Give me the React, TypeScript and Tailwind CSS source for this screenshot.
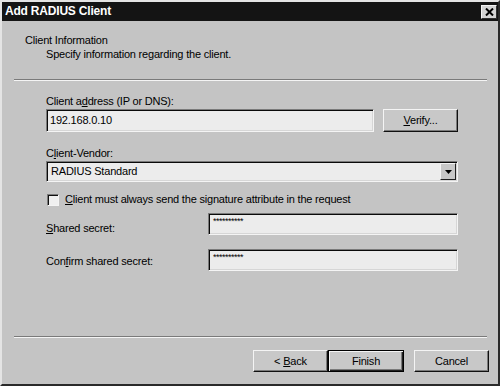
import React from "react";

const font = { fontFamily: '"Liberation Sans", Arial, sans-serif' };

function Sunken({ className = "", children }: { className?: string; children?: React.ReactNode }) {
  return (
    <div
      className={
        "border border-t-[#7a7a7a] border-l-[#7a7a7a] border-b-[#f4f4f4] border-r-[#f4f4f4] shadow-[inset_1px_1px_0_#0a0a0a,inset_-1px_-1px_0_#d6d6d6] bg-[#ececec] " +
        className
      }
    >
      {children}
    </div>
  );
}

function Btn({ children, def = false, className = "" }: { children: React.ReactNode; def?: boolean; className?: string }) {
  return (
    <div
      className={
        (def
          ? "border border-black shadow-[inset_1px_1px_0_#f4f4f4,inset_-1px_-1px_0_#202020,inset_-2px_-2px_0_#7a7a7a] "
          : "border border-t-[#f4f4f4] border-l-[#f4f4f4] border-b-[#101010] border-r-[#101010] shadow-[inset_-1px_-1px_0_#7a7a7a] ") +
        "flex items-center justify-center bg-[#c8c8c8] text-[11px] text-black " +
        className
      }
    >
      {children}
    </div>
  );
}

export default function App() {
  return (
    <div
      style={font}
      className="w-[500px] h-[386px] flex flex-col bg-[#c4c4c4] border-2 border-t-[#e4e4e4] border-l-[#e4e4e4] border-b-[#2a2a2a] border-r-[#2a2a2a] text-[11px] leading-[13px] tracking-[-0.2px] text-black"
    >
      {/* Title bar */}
      <div className="h-[19px] bg-[#141414] flex items-center justify-between pl-[3px] pr-[1px]">
        <span className="text-white font-bold text-[12px] leading-[15px] tracking-[-0.2px]">Add RADIUS Client</span>
        <div className="w-[16px] h-[14px] bg-[#d4d4d4] border border-t-[#f4f4f4] border-l-[#f4f4f4] border-b-[#303030] border-r-[#303030] flex items-center justify-center">
          <svg width="9" height="8" viewBox="0 0 9 8">
            <path d="M1 0.5 L8 7.5 M8 0.5 L1 7.5" stroke="#000" strokeWidth="2" />
          </svg>
        </div>
      </div>

      {/* Header */}
      <div className="mt-[13px] pl-[23px] h-[13px]">Client Information</div>
      <div className="mt-[1px] pl-[44px] h-[13px]">Specify information regarding the client.</div>
      <div className="mt-[18px] ml-[12px] mr-[11px] h-[2px] border-t border-t-[#7a7a7a] border-b border-b-[#f4f4f4]" />

      {/* Form */}
      <div className="pl-[44px] flex flex-col">
        <div className="mt-[14px] h-[13px]">
          Client a<span className="underline">d</span>dress (IP or DNS):
        </div>
        <div className="mt-[1px] flex h-[23px] gap-[9px]">
          <Sunken className="w-[328px] h-[23px] flex items-center pl-[3px]">192.168.0.10</Sunken>
          <Btn className="w-[75px] h-[23px]">
            <span>
              <span className="underline">V</span>erify...
            </span>
          </Btn>
        </div>
        <div className="mt-[15px] h-[13px]">
          C<span className="underline">l</span>ient-Vendor:
        </div>
        <Sunken className="mt-[1px] w-[412px] h-[21px] flex items-center justify-between pl-[4px] pr-[1px]">
          <span>RADIUS Standard</span>
          <div className="w-[16px] h-[17px] bg-[#c8c8c8] border border-t-[#f4f4f4] border-l-[#f4f4f4] border-b-[#202020] border-r-[#202020] flex items-center justify-center">
            <svg width="7" height="4" viewBox="0 0 7 4">
              <path d="M0 0 H7 L3.5 4 Z" fill="#000" />
            </svg>
          </div>
        </Sunken>
        <div className="mt-[11px] h-[13px] flex items-center gap-[6px]">
          <div className="ml-[1px] w-[12px] h-[12px] bg-[#f0f0f0] border border-t-[#7a7a7a] border-l-[#7a7a7a] border-b-[#f4f4f4] border-r-[#f4f4f4] shadow-[inset_1px_1px_0_#101010]" />
          <span>
            <span className="underline">C</span>lient must always send the signature attribute in the request
          </span>
        </div>
        <div className="mt-[7px] h-[22px] flex">
          <div className="w-[162px] pt-[9px]">
            <span className="underline">S</span>hared secret:
          </div>
          <Sunken className="w-[250px] h-[22px] pl-[4px] pt-[2px] text-[9px] leading-[10px] tracking-[-0.5px]">**********</Sunken>
        </div>
        <div className="mt-[14px] h-[22px] flex">
          <div className="w-[162px] pt-[6px]">
            Con<span className="underline">f</span>irm shared secret:
          </div>
          <Sunken className="w-[250px] h-[22px] pl-[4px] pt-[2px] text-[9px] leading-[10px] tracking-[-0.5px]">**********</Sunken>
        </div>
      </div>

      <div className="mt-[65px] ml-[12px] mr-[11px] h-[2px] border-t border-t-[#7a7a7a] border-b border-b-[#f4f4f4]" />

      <div className="mt-[12px] flex justify-end pr-[9px]">
        <Btn className="w-[75px] h-[22px]">
          <span>
            &lt; <span className="underline">B</span>ack
          </span>
        </Btn>
        <Btn def className="w-[76px] h-[22px]">Finish</Btn>
        <Btn className="ml-[10px] w-[75px] h-[22px]">Cancel</Btn>
      </div>
    </div>
  );
}
